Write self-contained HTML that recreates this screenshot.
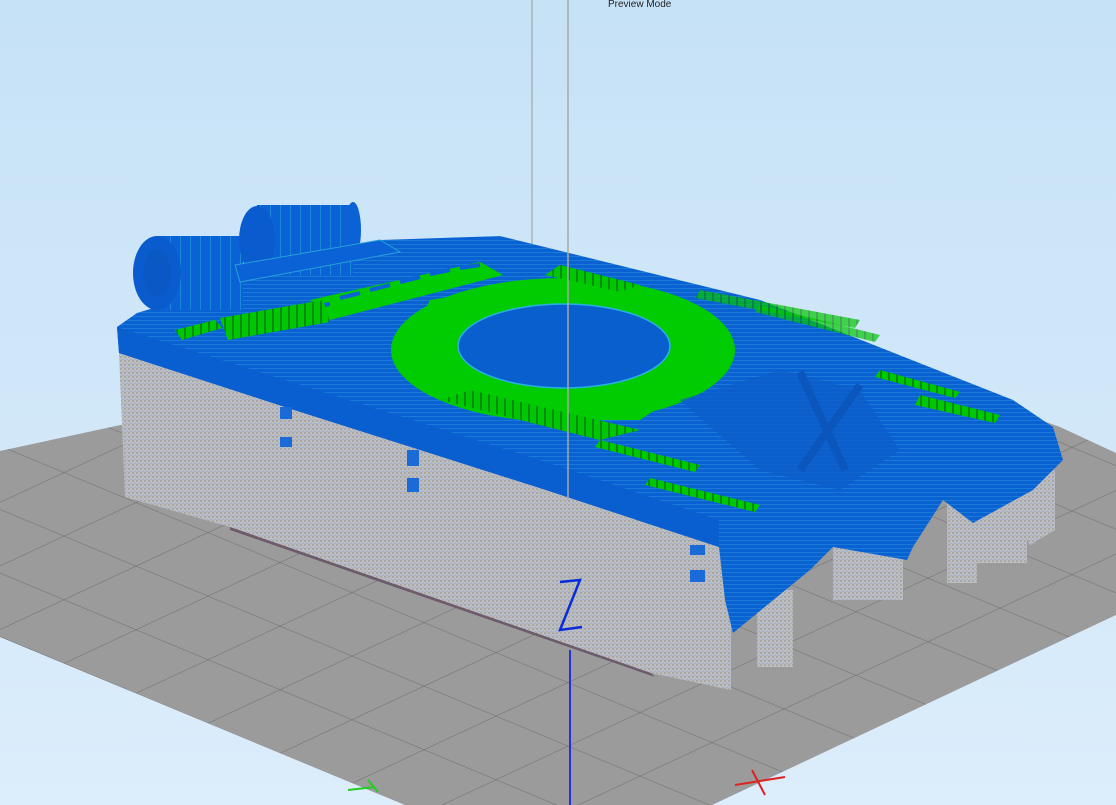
<!DOCTYPE html>
<html><head><style>
html,body{margin:0;padding:0;width:1116px;height:805px;overflow:hidden;background:#d2e8f9;}
svg{display:block}
</style></head><body>
<svg width="1116" height="805" viewBox="0 0 1116 805" xmlns="http://www.w3.org/2000/svg">
<defs>
<linearGradient id="bg" x1="0" y1="0" x2="0" y2="1"><stop offset="0" stop-color="#c6e2f7"/><stop offset="1" stop-color="#dcedfb"/></linearGradient>
<pattern id="grid" width="60" height="60" patternUnits="userSpaceOnUse" patternTransform="matrix(1.2,0.5,-1.2,0.56,568,873)">
<rect width="60" height="60" fill="#9b9b9b"/>
<path d="M0 0H60M0 0V60" stroke="#727272" stroke-width="1.2" fill="none"/>
</pattern>
<pattern id="gs" width="4" height="4" patternUnits="userSpaceOnUse"><rect width="4" height="4" fill="#bdbdbd"/><rect width="2" height="2" fill="#a8a8a8"/><rect x="2" y="3" width="2" height="1" fill="#9fb0d8"/></pattern>
<pattern id="gr" width="8" height="4" patternUnits="userSpaceOnUse"><rect width="8" height="4" fill="#00c800"/><rect width="2" height="4" fill="#0a8a14"/></pattern>
<pattern id="bl" width="4" height="4" patternUnits="userSpaceOnUse"><rect width="4" height="4" fill="#0a62d2"/><rect width="4" height="1" fill="#1a7ad8"/></pattern>
<pattern id="drum" width="10" height="4" patternUnits="userSpaceOnUse"><rect width="10" height="4" fill="#0a62d6"/><rect width="1" height="4" fill="#1a8ad8"/></pattern>
</defs>
<rect width="1116" height="805" fill="url(#bg)"/>
<polygon points="0,451 700,300 1060,427 1116,453 1116,615 712,805 405,805 0,637" fill="url(#grid)"/>
<line x1="532" y1="0" x2="532" y2="250" stroke="#9a9a9a"/>
<polygon points="757,590 793,590 793,667 757,667" fill="url(#gs)"/>
<polygon points="833,540 903,540 903,600 833,600" fill="url(#gs)"/>
<polygon points="947,495 977,495 977,583 947,583" fill="url(#gs)"/>
<polygon points="977,500 1027,500 1027,563 977,563" fill="url(#gs)"/>
<polygon points="1000,490 1055,470 1055,530 1030,545" fill="url(#gs)"/>
<polygon points="119,353 285,407 546,490 719,547 731,547 731,690 651,673 230,527 125,497" fill="url(#gs)"/>
<polygon points="230,527 651,673 655,677 230,530" fill="#6d5a6a"/>
<polygon points="117,327 137,313 380,240 500,236 760,300 1013,400 1053,427 1063,460 1033,490 973,523 943,500 913,547 907,560 833,547 810,570 733,633 725,600 719,547 546,490 285,407 119,353" fill="url(#bl)"/>
<polygon points="117,327 285,380 546,462 719,520 719,547 546,490 285,407 119,353" fill="#0a5fd0"/>
<rect x="157" y="236" width="86" height="74" fill="url(#drum)"/>
<ellipse cx="157" cy="273" rx="24" ry="37" fill="#0a5cce"/>
<ellipse cx="157" cy="273" rx="14" ry="24" fill="#0a58c4"/>
<rect x="257" y="205" width="96" height="70" fill="url(#drum)"/>
<ellipse cx="257" cy="240" rx="18" ry="34" fill="#0a5cce"/>
<ellipse cx="353" cy="230" rx="8" ry="28" fill="#0a62d6"/>
<polygon points="235,265 380,240 400,252 240,282" fill="#0a62d6" stroke="#28a0d8" stroke-width="1"/>
<polygon points="400,360 430,300 520,285 600,290 700,330 700,380 640,420 560,420 450,390" fill="#00cc00"/>
<ellipse cx="563" cy="350" rx="172" ry="72" fill="#00cc00"/>
<ellipse cx="564" cy="346" rx="106" ry="42" fill="#0a5fcf" stroke="#2ab0e0" stroke-width="1.5"/>
<polygon points="310,300 480,262 503,275 330,320" fill="#00cc00"/>
<g stroke="#0a62d6" stroke-width="4">
<line x1="318" y1="306" x2="330" y2="304"/><line x1="340" y1="298" x2="360" y2="293"/><line x1="370" y1="290" x2="390" y2="285"/><line x1="400" y1="282" x2="420" y2="277"/><line x1="430" y1="274" x2="450" y2="270"/><line x1="460" y1="268" x2="480" y2="265"/>
</g>
<polygon points="220,318 323,300 330,322 228,340" fill="url(#gr)"/>
<polygon points="560,265 640,285 620,292 545,275" fill="url(#gr)"/>
<polygon points="440,400 600,440 640,430 470,390" fill="url(#gr)"/>
<polygon points="175,330 215,320 222,328 182,340" fill="url(#gr)"/>
<polygon points="600,440 700,465 695,472 595,447" fill="url(#gr)"/>
<polygon points="650,478 760,505 755,512 645,485" fill="url(#gr)"/>
<polygon points="920,395 1000,415 995,423 915,405" fill="url(#gr)"/>
<polygon points="880,370 960,392 955,398 875,377" fill="url(#gr)"/>
<polygon points="700,290 860,320 855,328 695,298" fill="url(#gr)" opacity="0.7"/>
<polygon points="760,305 880,335 875,342 755,312" fill="url(#gr)" opacity="0.7"/>
<polygon points="680,400 780,370 860,390 900,450 840,490 760,470" fill="#0b5cc8" opacity="0.7"/>
<path d="M800 372L845 470M860 385L800 470" stroke="#0a56bc" stroke-width="8"/>
<g fill="#1a6ad8"><rect x="280" y="407" width="12" height="12"/><rect x="280" y="437" width="12" height="10"/><rect x="407" y="450" width="12" height="16"/><rect x="407" y="478" width="12" height="14"/><rect x="690" y="545" width="15" height="10"/><rect x="690" y="570" width="15" height="12"/></g>
<line x1="568" y1="0" x2="568" y2="500" stroke="#a8a8a8" stroke-width="1.5"/>
<text x="608" y="7" font-family="Liberation Sans, sans-serif" font-size="10" fill="#222">Preview Mode</text>
<path d="M560 582L580 580L560 630L582 627" stroke="#0a2bd8" stroke-width="2.5" fill="none"/>
<line x1="570" y1="650" x2="570" y2="805" stroke="#2233dd" stroke-width="2"/>
<path d="M348 790L375 787M368 780L378 792" stroke="#22cc22" stroke-width="2"/>
<path d="M735 785L785 777M752 770L765 795" stroke="#dd2222" stroke-width="2"/>
</svg>
</body></html>
